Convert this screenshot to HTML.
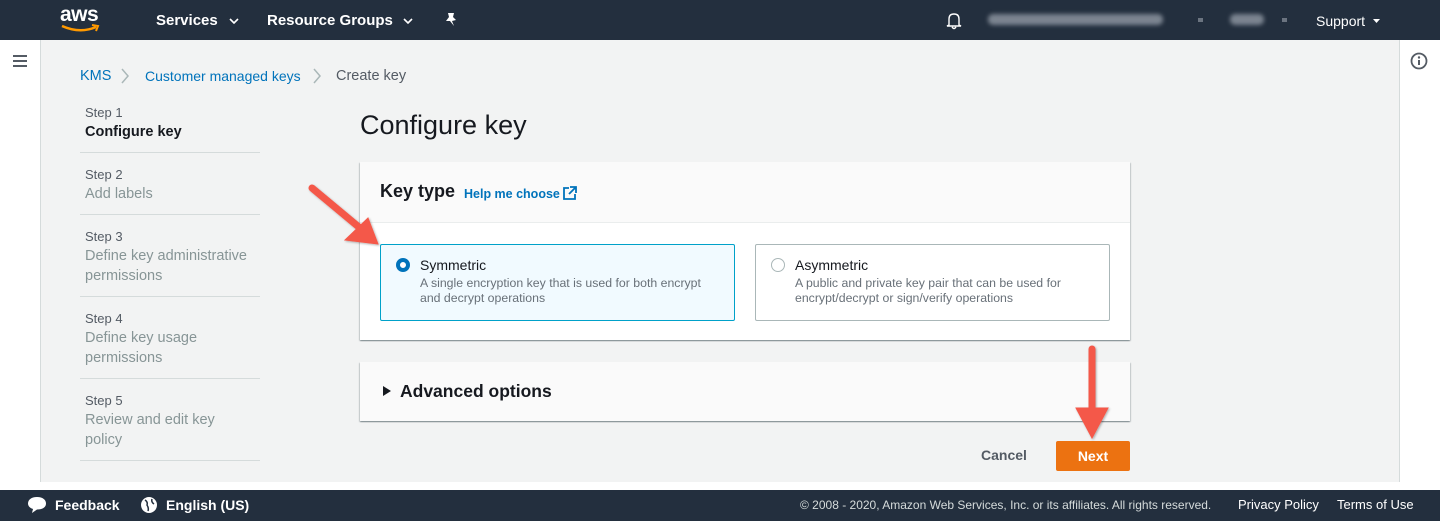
<!DOCTYPE html>
<html><head><meta charset="utf-8"><style>
*{margin:0;padding:0;box-sizing:border-box}
body{width:1440px;height:521px;overflow:hidden;background:#fff;font-family:"Liberation Sans",Arial,sans-serif;position:relative}
.a{position:absolute;white-space:nowrap}
.top{left:0;top:0;width:1440px;height:40px;background:#232f3e}
.w{color:#fff;font-size:15px;font-weight:bold}
.main{left:41px;top:40px;width:1358px;height:442px;background:#f2f3f3}
.foot{left:0;top:490px;width:1440px;height:31px;background:#232f3e}
.sep{left:80px;width:180px;height:1px;background:#d5dbdb}
.st{left:85px;font-size:13px;color:#545b64}
.sl{left:85px;font-size:14.5px;color:#879596;line-height:20px}
.card{background:#fff;box-shadow:0 1px 1px rgba(0,28,36,.3),1px 1px 1px rgba(0,28,36,.15),-1px 1px 1px rgba(0,28,36,.15)}
.opt{font-size:14px;color:#16191f}
.desc{font-size:12.3px;color:#687078;line-height:15px}
.ft{color:#fff;font-size:13px}
</style></head><body>
<div class="a top"></div>
<div class="a" style="left:60px;top:3px;color:#fff;font-size:21px;font-weight:bold;letter-spacing:-0.5px">aws</div>
<svg class="a" style="left:60px;top:24px" width="42" height="10"><path d="M2 2 Q20 10 36 3" stroke="#ff9900" stroke-width="2.5" fill="none"/><path d="M32 1 L38 2 L36 7" stroke="#ff9900" stroke-width="2" fill="none"/></svg>
<div class="a w" style="left:156px;top:12px">Services</div>
<svg class="a" style="left:229px;top:18px" width="10" height="6"><path d="M1 1 L5 5 L9 1" stroke="#fff" stroke-width="1.6" fill="none"/></svg>
<div class="a w" style="left:267px;top:12px">Resource Groups</div>
<svg class="a" style="left:403px;top:18px" width="10" height="6"><path d="M1 1 L5 5 L9 1" stroke="#fff" stroke-width="1.6" fill="none"/></svg>
<svg class="a" style="left:443px;top:12px" width="16" height="16"><path d="M5 1 L11 1 L10 5 L13 8 L9 9 L11 14 L7 9 L3 9 L6 5 Z" fill="#fff"/></svg>
<svg class="a" style="left:945px;top:11px" width="18" height="19"><path d="M4 14 L4 8 Q4 3 9 3 Q14 3 14 8 L14 14 L16 15 L2 15 Z M7 16 Q9 19 11 16" stroke="#fff" stroke-width="1.4" fill="none"/></svg>
<div class="a" style="left:988px;top:14px;width:175px;height:11px;background:#7b8490;border-radius:5px;filter:blur(2px)"></div>
<div class="a" style="left:1198px;top:18px;width:5px;height:4px;background:#6b7480"></div>
<div class="a" style="left:1230px;top:14px;width:34px;height:11px;background:#7b8490;border-radius:5px;filter:blur(2px)"></div>
<div class="a" style="left:1282px;top:18px;width:5px;height:4px;background:#6b7480"></div>
<div class="a" style="left:1316px;top:13px;color:#fff;font-size:14px">Support</div>
<svg class="a" style="left:1372px;top:18px" width="9" height="6"><path d="M1 1 L4.5 5 L8 1Z" fill="#fff"/></svg>

<div class="a main"></div>
<div class="a" style="left:40px;top:40px;width:1px;height:442px;background:#d5dbdb"></div>
<div class="a" style="left:1399px;top:40px;width:1px;height:442px;background:#d5dbdb"></div>
<svg class="a" style="left:12px;top:54px" width="16" height="14"><path d="M1 2H15M1 7H15M1 12H15" stroke="#545b64" stroke-width="2"/></svg>
<svg class="a" style="left:1410px;top:52px" width="18" height="18"><circle cx="9" cy="9" r="7.5" stroke="#545b64" stroke-width="1.8" fill="none"/><circle cx="9" cy="5.5" r="1.2" fill="#545b64"/><path d="M9 8V13" stroke="#545b64" stroke-width="2"/></svg>

<div class="a" style="left:80px;top:68px;font-size:14.5px;color:#0073bb">KMS</div>
<svg class="a" style="left:120px;top:68px" width="10" height="16"><path d="M2 1 L8 8 L2 15" stroke="#aab7b8" stroke-width="1.5" fill="none"/></svg>
<div class="a" style="left:145px;top:68px;font-size:14px;color:#0073bb">Customer managed keys</div>
<svg class="a" style="left:312px;top:68px" width="10" height="16"><path d="M2 1 L8 8 L2 15" stroke="#aab7b8" stroke-width="1.5" fill="none"/></svg>
<div class="a" style="left:336px;top:68px;font-size:14.5px;color:#545b64">Create key</div>

<div class="a st" style="top:105px">Step 1</div>
<div class="a" style="left:85px;top:124px;font-size:14.5px;font-weight:bold;color:#16191f">Configure key</div>
<div class="a sep" style="top:152px"></div>
<div class="a st" style="top:167px">Step 2</div>
<div class="a sl" style="top:184px">Add labels</div>
<div class="a sep" style="top:214px"></div>
<div class="a st" style="top:229px">Step 3</div>
<div class="a sl" style="top:246px">Define key administrative<br>permissions</div>
<div class="a sep" style="top:296px"></div>
<div class="a st" style="top:311px">Step 4</div>
<div class="a sl" style="top:328px">Define key usage<br>permissions</div>
<div class="a sep" style="top:378px"></div>
<div class="a st" style="top:393px">Step 5</div>
<div class="a sl" style="top:410px">Review and edit key<br>policy</div>
<div class="a sep" style="top:460px"></div>

<div class="a" style="left:360px;top:110px;font-size:27px;color:#16191f">Configure key</div>

<div class="a card" style="left:360px;top:162px;width:770px;height:178px"></div>
<div class="a" style="left:360px;top:162px;width:770px;height:61px;background:#fafafa;border-bottom:1px solid #eaeded"></div>
<div class="a" style="left:380px;top:181px;font-size:18px;font-weight:bold;color:#16191f">Key type</div>
<div class="a" style="left:464px;top:187px;font-size:12.5px;font-weight:bold;color:#0073bb">Help me choose</div>
<svg class="a" style="left:562px;top:186px" width="15" height="15"><path d="M7 2H2V13H13V8" stroke="#0073bb" stroke-width="1.8" fill="none"/><path d="M8 1H14V7M14 1L7 8" stroke="#0073bb" stroke-width="1.8" fill="none"/></svg>

<div class="a" style="left:380px;top:244px;width:355px;height:77px;border:1px solid #00a1c9;background:#f1faff;border-radius:2px"></div>
<div class="a" style="left:396px;top:258px;width:14px;height:14px;border-radius:50%;border:4px solid #0073bb;background:#fff"></div>
<div class="a opt" style="left:420px;top:257px">Symmetric</div>
<div class="a desc" style="left:420px;top:276px">A single encryption key that is used for both encrypt<br>and decrypt operations</div>

<div class="a" style="left:755px;top:244px;width:355px;height:77px;border:1px solid #aab7b8;background:#fff;border-radius:2px"></div>
<div class="a" style="left:771px;top:258px;width:14px;height:14px;border-radius:50%;border:1px solid #aab7b8;background:#fff"></div>
<div class="a opt" style="left:795px;top:257px">Asymmetric</div>
<div class="a desc" style="left:795px;top:276px">A public and private key pair that can be used for<br>encrypt/decrypt or sign/verify operations</div>

<div class="a card" style="left:360px;top:362px;width:770px;height:59px;background:#fafafa"></div>
<svg class="a" style="left:382px;top:385px" width="10" height="12"><path d="M1 1 L9 6 L1 11Z" fill="#16191f"/></svg>
<div class="a" style="left:400px;top:381px;font-size:17.5px;font-weight:bold;color:#16191f">Advanced options</div>

<div class="a" style="left:981px;top:447px;font-size:14px;font-weight:bold;color:#545b64">Cancel</div>
<div class="a" style="left:1056px;top:441px;width:74px;height:30px;background:#ec7211;border-radius:2px;color:#fff;font-size:14px;font-weight:bold;text-align:center;line-height:30px">Next</div>

<svg class="a" style="left:0;top:0" width="1440" height="521">
<defs><filter id="s"><feDropShadow dx="1" dy="1" stdDeviation="1" flood-opacity=".3"/></filter></defs>
<g filter="url(#s)" fill="#f4594a" stroke="#f4594a">
<path d="M312 188 L360 228" stroke-width="7" stroke-linecap="round"/>
<path d="M378 244 L345 240 L368 218 Z" stroke-width="1"/>
<path d="M1092 349 L1092 415" stroke-width="7" stroke-linecap="round"/>
<path d="M1092 438 L1076 408 L1108 408 Z" stroke-width="1"/>
</g></svg>

<div class="a foot"></div>
<svg class="a" style="left:27px;top:496px" width="20" height="18"><path d="M10 1C4 1 1 4 1 7.5C1 10 3 12 6 13L5 17L10 13.5C16 13.5 19 11 19 7.5C19 4 16 1 10 1Z" fill="#fff"/></svg>
<div class="a ft" style="left:55px;top:497px;font-size:14px;font-weight:bold">Feedback</div>
<svg class="a" style="left:140px;top:496px" width="18" height="18"><circle cx="9" cy="9" r="8" fill="#fff"/><path d="M5 4Q8 6 7 9Q9 12 8 15M12 3Q11 6 14 8" stroke="#232f3e" stroke-width="1.5" fill="none"/></svg>
<div class="a ft" style="left:166px;top:497px;font-size:14px;font-weight:bold">English (US)</div>
<div class="a" style="left:800px;top:498px;font-size:12px;color:#d5dbdb">© 2008 - 2020, Amazon Web Services, Inc. or its affiliates. All rights reserved.</div>
<div class="a ft" style="left:1238px;top:497px">Privacy Policy</div>
<div class="a ft" style="left:1337px;top:497px">Terms of Use</div>
</body></html>
